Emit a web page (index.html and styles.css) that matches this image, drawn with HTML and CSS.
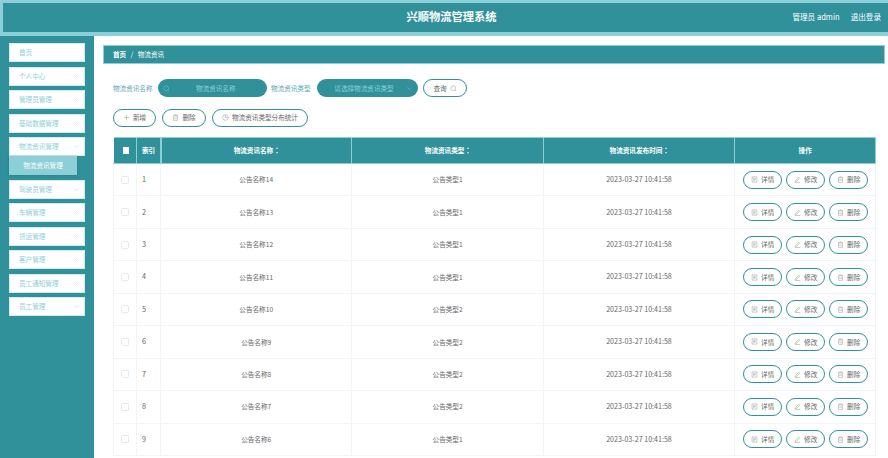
FILE: index.html
```html
<!DOCTYPE html>
<html lang="zh">
<head>
<meta charset="utf-8">
<title>兴顺物流管理系统</title>
<link rel="stylesheet" href="styles.css">
</head>
<body>
<svg class="defs" width="0" height="0" aria-hidden="true">
  <symbol id="i-search" viewBox="0 0 16 16"><circle cx="7.5" cy="7.5" r="5.5"/><path d="M11.5 11.5L14 14"/></symbol>
  <symbol id="i-down" viewBox="0 0 16 16"><path d="M3 5.5L8 10.5L13 5.5"/></symbol>
  <symbol id="i-plus" viewBox="0 0 16 16"><path d="M8 2V14M2 8H14"/></symbol>
  <symbol id="i-trash" viewBox="0 0 16 16"><path d="M2.5 4H13.5M6 4V2H10V4M3.5 4V14.5H12.5V4M6.5 7.5V11.5M9.5 7.5V11.5"/></symbol>
  <symbol id="i-pie" viewBox="0 0 16 16"><circle cx="8" cy="8" r="6.5"/><path d="M8 1.5V8H14.5"/></symbol>
  <symbol id="i-doc" viewBox="0 0 16 16"><path d="M2.5 2H13.5V14H2.5ZM5 5.5H11M5 8H11M5 10.5H9"/></symbol>
  <symbol id="i-edit" viewBox="0 0 16 16"><path d="M3 11L10.5 2.5L13 5L5.5 12.5L2.5 13.5ZM2 15H14"/></symbol>
</svg>
<header class="topbar">
  <h1 class="brand">兴顺物流管理系统</h1>
  <div class="account"><span>管理员 admin</span><span class="logout">退出登录</span></div>
</header>
<div class="layout">
  <nav class="sidebar">
    <div class="nav-item">首页</div>
    <div class="nav-item">个人中心<svg class="ic chev"><use href="#i-down"/></svg></div>
    <div class="nav-item">管理员管理<svg class="ic chev"><use href="#i-down"/></svg></div>
    <div class="nav-item">基础数据管理<svg class="ic chev"><use href="#i-down"/></svg></div>
    <div class="nav-group">
      <div class="nav-item">物流资讯管理<svg class="ic chev"><use href="#i-down"/></svg></div>
      <div class="nav-sub">物流资讯管理</div>
    </div>
    <div class="nav-item">驾驶员管理<svg class="ic chev"><use href="#i-down"/></svg></div>
    <div class="nav-item">车辆管理<svg class="ic chev"><use href="#i-down"/></svg></div>
    <div class="nav-item">货运管理<svg class="ic chev"><use href="#i-down"/></svg></div>
    <div class="nav-item">客户管理<svg class="ic chev"><use href="#i-down"/></svg></div>
    <div class="nav-item">员工通知管理<svg class="ic chev"><use href="#i-down"/></svg></div>
    <div class="nav-item">员工管理<svg class="ic chev"><use href="#i-down"/></svg></div>
  </nav>
  <main class="content">
    <div class="crumb"><b>首页</b><span class="sep">/</span><span>物流资讯</span></div>
    <div class="body">
      <form class="filters">
        <label class="flabel">物流资讯名称</label>
        <div class="field field-name"><svg class="ic"><use href="#i-search"/></svg><span class="ph">物流资讯名称</span></div>
        <label class="flabel">物流资讯类型</label>
        <div class="field field-type"><span class="ph">请选择物流资讯类型</span><svg class="ic"><use href="#i-down"/></svg></div>
        <button type="button" class="btn btn-query">查询<svg class="ic"><use href="#i-search"/></svg></button>
      </form>
      <div class="actions">
        <button type="button" class="btn btn-add"><svg class="ic"><use href="#i-plus"/></svg>新增</button>
        <button type="button" class="btn btn-del"><svg class="ic"><use href="#i-trash"/></svg>删除</button>
        <button type="button" class="btn btn-stat"><svg class="ic"><use href="#i-pie"/></svg>物流资讯类型分布统计</button>
      </div>
      <table class="grid">
        <colgroup><col class="c-check"><col class="c-idx"><col class="c-data"><col class="c-data"><col class="c-data"><col class="c-ops"></colgroup>
        <thead>
          <tr>
            <th class="t-check"><span class="box box-head"></span></th>
            <th class="t-idx">索引</th>
            <th>物流资讯名称<span class="sort"></span></th>
            <th>物流资讯类型<span class="sort"></span></th>
            <th>物流资讯发布时间<span class="sort"></span></th>
            <th>操作</th>
          </tr>
        </thead>
        <tbody>
          <tr><td class="t-check"><span class="box"></span></td><td class="t-idx">1</td><td>公告名称14</td><td>公告类型1</td><td class="date">2023-03-27 10:41:58</td><td class="ops"><button type="button" class="btn btn-op"><svg class="ic"><use href="#i-doc"/></svg>详情</button><button type="button" class="btn btn-op"><svg class="ic"><use href="#i-edit"/></svg>修改</button><button type="button" class="btn btn-op"><svg class="ic"><use href="#i-trash"/></svg>删除</button></td></tr>
          <tr><td class="t-check"><span class="box"></span></td><td class="t-idx">2</td><td>公告名称13</td><td>公告类型1</td><td class="date">2023-03-27 10:41:58</td><td class="ops"><button type="button" class="btn btn-op"><svg class="ic"><use href="#i-doc"/></svg>详情</button><button type="button" class="btn btn-op"><svg class="ic"><use href="#i-edit"/></svg>修改</button><button type="button" class="btn btn-op"><svg class="ic"><use href="#i-trash"/></svg>删除</button></td></tr>
          <tr><td class="t-check"><span class="box"></span></td><td class="t-idx">3</td><td>公告名称12</td><td>公告类型1</td><td class="date">2023-03-27 10:41:58</td><td class="ops"><button type="button" class="btn btn-op"><svg class="ic"><use href="#i-doc"/></svg>详情</button><button type="button" class="btn btn-op"><svg class="ic"><use href="#i-edit"/></svg>修改</button><button type="button" class="btn btn-op"><svg class="ic"><use href="#i-trash"/></svg>删除</button></td></tr>
          <tr><td class="t-check"><span class="box"></span></td><td class="t-idx">4</td><td>公告名称11</td><td>公告类型1</td><td class="date">2023-03-27 10:41:58</td><td class="ops"><button type="button" class="btn btn-op"><svg class="ic"><use href="#i-doc"/></svg>详情</button><button type="button" class="btn btn-op"><svg class="ic"><use href="#i-edit"/></svg>修改</button><button type="button" class="btn btn-op"><svg class="ic"><use href="#i-trash"/></svg>删除</button></td></tr>
          <tr><td class="t-check"><span class="box"></span></td><td class="t-idx">5</td><td>公告名称10</td><td>公告类型2</td><td class="date">2023-03-27 10:41:58</td><td class="ops"><button type="button" class="btn btn-op"><svg class="ic"><use href="#i-doc"/></svg>详情</button><button type="button" class="btn btn-op"><svg class="ic"><use href="#i-edit"/></svg>修改</button><button type="button" class="btn btn-op"><svg class="ic"><use href="#i-trash"/></svg>删除</button></td></tr>
          <tr><td class="t-check"><span class="box"></span></td><td class="t-idx">6</td><td>公告名称9</td><td>公告类型2</td><td class="date">2023-03-27 10:41:58</td><td class="ops"><button type="button" class="btn btn-op"><svg class="ic"><use href="#i-doc"/></svg>详情</button><button type="button" class="btn btn-op"><svg class="ic"><use href="#i-edit"/></svg>修改</button><button type="button" class="btn btn-op"><svg class="ic"><use href="#i-trash"/></svg>删除</button></td></tr>
          <tr><td class="t-check"><span class="box"></span></td><td class="t-idx">7</td><td>公告名称8</td><td>公告类型2</td><td class="date">2023-03-27 10:41:58</td><td class="ops"><button type="button" class="btn btn-op"><svg class="ic"><use href="#i-doc"/></svg>详情</button><button type="button" class="btn btn-op"><svg class="ic"><use href="#i-edit"/></svg>修改</button><button type="button" class="btn btn-op"><svg class="ic"><use href="#i-trash"/></svg>删除</button></td></tr>
          <tr><td class="t-check"><span class="box"></span></td><td class="t-idx">8</td><td>公告名称7</td><td>公告类型2</td><td class="date">2023-03-27 10:41:58</td><td class="ops"><button type="button" class="btn btn-op"><svg class="ic"><use href="#i-doc"/></svg>详情</button><button type="button" class="btn btn-op"><svg class="ic"><use href="#i-edit"/></svg>修改</button><button type="button" class="btn btn-op"><svg class="ic"><use href="#i-trash"/></svg>删除</button></td></tr>
          <tr><td class="t-check"><span class="box"></span></td><td class="t-idx">9</td><td>公告名称6</td><td>公告类型1</td><td class="date">2023-03-27 10:41:58</td><td class="ops"><button type="button" class="btn btn-op"><svg class="ic"><use href="#i-doc"/></svg>详情</button><button type="button" class="btn btn-op"><svg class="ic"><use href="#i-edit"/></svg>修改</button><button type="button" class="btn btn-op"><svg class="ic"><use href="#i-trash"/></svg>删除</button></td></tr>
        </tbody>
      </table>
    </div>
  </main>
</div>
</body>
</html>
```
FILE: styles.css
```css
* { box-sizing: border-box; }
html, body { margin: 0; height: 458px; overflow: hidden; background: #fff; }
body { font-family: "Noto Sans CJK SC", "Noto Sans", sans-serif; font-size: 6.6px; color: #666; line-height: 1; }
.defs { position: absolute; }
.ic { width: 7px; height: 7px; fill: none; stroke: currentColor; stroke-width: 1; flex: none; }

.topbar { height: 36px; background: #30919a; border: 3.5px solid #8dcfd6; border-right: 0; border-bottom-width: 4px; display: flex; align-items: center; justify-content: center; padding-left: 12px; position: relative; }
.brand { margin: 0 0 2px; font-size: 11.25px; font-weight: 700; color: #fff; }
.account { position: absolute; top: 0; bottom: 2px; right: 7px; display: flex; align-items: center; gap: 11px; color: #fff; font-size: 7.6px; }

.layout { display: flex; height: 422px; }
.sidebar { width: 94px; flex: none; background: #30919a; padding: 7px 9px 0; display: flex; flex-direction: column; gap: 4.5px; }
.nav-item { height: 19px; background: #fff; border: 1px solid #d2ecef; color: #8dcfd6; padding: 0 4px 0 9px; display: flex; align-items: center; justify-content: space-between; }
.chev { width: 7px; height: 7px; color: #8dcfd6; }
.nav-group { display: flex; flex-direction: column; }
.nav-sub { width: 68px; height: 19px; background: #8dcfd6; color: #fff; display: flex; align-items: center; justify-content: center; box-shadow: 0 0 3px rgba(0,0,0,.15); }

.content { flex: 1; min-width: 0; padding: 9px 3px 0 9px; }
.crumb { height: 19px; background: #30919a; border: 1px solid #8dcfd6; color: #fff; display: flex; align-items: center; padding-left: 9px; }
.crumb b { font-weight: 700; }
.sep { margin: 0 4.5px; }
.body { padding: 15px 10px 0; }

.filters { display: flex; align-items: center; height: 18px; }
.flabel { color: #5ba7ae; width: 40px; white-space: nowrap; }
.field { height: 18px; background: #30919a; border-radius: 9px; color: #8dcfd6; display: flex; align-items: center; }
.field-name { width: 108.5px; margin: 0 4.5px 0 5px; padding: 0 5px; }
.field-type { width: 101px; margin: 0 5px 0 6px; padding: 0 5px; }
.ph { flex: 1; text-align: center; }

.btn { font: inherit; color: #666; background: #fff; border: 1.5px solid #30919a; border-radius: 9.5px; height: 18.5px; padding: 0; display: inline-flex; align-items: center; justify-content: center; gap: 3px; }
.btn .ic { color: #888; }
.btn-query { width: 44px; height: 18px; }
.actions { display: flex; gap: 6px; margin-top: 11.5px; }
.btn-add { width: 43px; }
.btn-del { width: 44px; }
.btn-stat { width: 96px; }

.grid { width: 762px; margin-top: 10px; border-collapse: collapse; table-layout: fixed; }
.c-check { width: 23px; }
.c-idx { width: 24px; }
.c-data { width: 191.4px; }
.c-ops { width: 141px; }
th { height: 26px; background: #30919a; color: #fff; font-weight: 700; border: 1px solid #8dcfd6; border-width: 1px 1px 1px 0; text-align: center; padding: 0; }
th.t-idx { border-right-width: 2px; font-size: 6.6px; }
td { height: 32.45px; border: 1px solid #f1f4f8; text-align: center; padding: 0; }
.t-idx { text-align: left; padding-left: 5px; font-size: 7.2px; }
.t-check { text-align: left; padding-left: 7px; }
.date { font-size: 7.1px; }
.box { display: block; width: 8px; height: 8px; background: #fff; border: 1px solid #e6e9ee; border-radius: 1.5px; }
.box-head { width: 6.5px; height: 6.5px; margin-left: 2px; border: 0; border-radius: 0; }
.sort { display: inline-block; width: 3px; height: 6px; margin-left: 3px; vertical-align: -0.5px; position: relative; }
.sort::before, .sort::after { content: ""; position: absolute; left: 0; border: 1.5px solid transparent; }
.sort::before { top: -1.5px; border-bottom: 2px solid #d2ecef; }
.sort::after { bottom: -1.5px; border-top: 2px solid #d2ecef; }
.ops { padding-left: 1px; }
.ops .btn + .btn { margin-left: 4.5px; }
.btn-op { width: 38.5px; height: 18px; }
```
